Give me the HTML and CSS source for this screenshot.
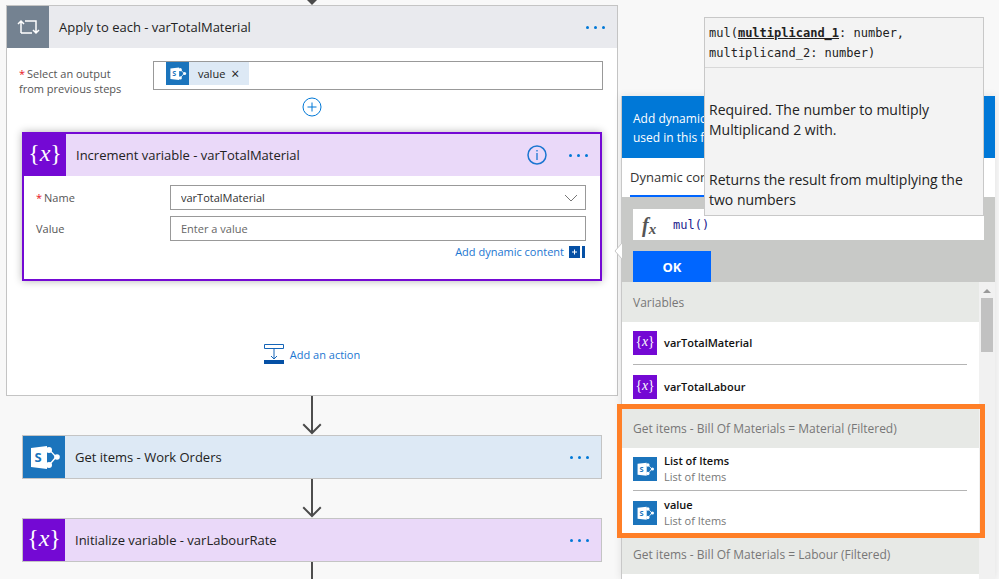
FILE: index.html
```html
<!DOCTYPE html>
<html lang="en">
<head>
    <meta charset="utf-8">
    <title>Edit flow</title>
    <link rel="stylesheet" href="styles.css">
</head>
<body>

<svg class="defs" aria-hidden="true">
    <symbol id="icon-sharepoint" viewBox="0 0 42 42">
        <path d="M24 14 H26 Q29 16 33 21 Q29 26 26 29 H24" fill="none" stroke="#fff" stroke-width="1.4"/>
        <path d="M8 12 L24 10 V33 L8 31 Z" fill="#fff"/>
        <circle cx="26" cy="14" r="3" fill="#fff"/>
        <circle cx="34" cy="21" r="2.800" fill="#fff"/>
        <circle cx="26" cy="29" r="3" fill="#fff"/>
        <text x="15" y="26" text-anchor="middle" font-size="13" class="icon-letter">S</text>
    </symbol>
    <symbol id="icon-variable" viewBox="0 0 42 42">
        <text x="21" y="27" text-anchor="middle" font-size="24" class="icon-braces">{<tspan font-style="italic">x</tspan>}</text>
    </symbol>
    <symbol id="icon-arrow" viewBox="0 0 20 40">
        <path d="M10 0 V38 M1 29 L10 38 L19 29" fill="none" stroke="#4a4a4a" stroke-width="2"/>
    </symbol>
</svg>

<main class="designer">
    <div class="arrow-end">
        <svg width="10" height="5"><path d="M0 0 H10 L5 5 Z" fill="#4a4a4a"/></svg>
    </div>

    <section class="scope">
        <header class="card-header loop">
            <span class="tile">
                <svg width="42" height="42" viewBox="0 0 42 42" fill="none" stroke="#fff" stroke-width="1.5">
                    <path d="M14 27 V15 M11 18 L14 15 L17 18 M18 15 H29 V27 M14 27 H25 M26 24 L29 27 L32 24"/>
                </svg>
            </span>
            <h2>Apply to each - varTotalMaterial</h2>
            <button class="more" aria-label="More options"><i></i><i></i><i></i></button>
        </header>

        <div class="output-row">
            <label for="output"><span class="required">*</span>Select an output<br>from previous steps</label>
            <div class="token-box">
                <span class="token">
                    <svg class="blue" width="23" height="23"><use href="#icon-sharepoint"/></svg>
                    <span>value</span>
                    <button class="remove" aria-label="Remove value">×</button>
                </span>
                <input type="text" id="output">
            </div>
        </div>

        <button class="insert" aria-label="Insert a step">
            <svg width="20" height="20" fill="none" stroke="#0078d7"><circle cx="10" cy="10" r="9"/><path d="M10 5.500 V14.500 M5.500 10 H14.500"/></svg>
        </button>

        <section class="action">
            <header class="card-header variable">
                <span class="tile"><svg width="42" height="42"><use href="#icon-variable"/></svg></span>
                <h2>Increment variable - varTotalMaterial</h2>
                <button class="info" aria-label="Information">
                    <svg width="20" height="20" fill="none" stroke="#1b76d1"><circle cx="10" cy="10" r="9" stroke-width="1.500"/><path d="M10 8 V15 M10 5 V6.500" stroke-width="1.300"/></svg>
                </button>
                <button class="more" aria-label="More options"><i></i><i></i><i></i></button>
            </header>
            <div class="fields">
                <label for="name"><span class="required">*</span>Name</label>
                <div class="select-wrap">
                    <select id="name"><option>varTotalMaterial</option></select>
                    <svg width="14" height="8" fill="none" stroke="#777"><path d="M1 1 L7 7 L13 1"/></svg>
                </div>
                <label for="value">Value</label>
                <input type="text" id="value" placeholder="Enter a value">
            </div>
            <a href="#" class="dynamic-link">Add dynamic content
                <svg width="16" height="12"><path d="M0 0 H11 V12 H0 Z M13 0 H16 V12 H13 Z" fill="#0550a5"/><path d="M3 6 H8 M5.500 3.500 V8.500" stroke="#fff"/></svg>
            </a>
        </section>

        <button class="add-action">
            <svg width="20" height="20" fill="none" stroke="#1565b8"><path d="M.5 .5 H19.500 V4.500 H.5 Z M10 5 V15 M7 12 L10 15 L13 12"/><path d="M0 16 H20 V20 H0 Z" fill="#0550a5" stroke="none"/></svg>
            Add an action
        </button>
    </section>

    <svg class="arrow" width="20" height="39"><use href="#icon-arrow"/></svg>

    <section class="step">
        <header class="card-header sharepoint">
            <span class="tile"><svg width="42" height="42"><use href="#icon-sharepoint"/></svg></span>
            <h2>Get items - Work Orders</h2>
            <button class="more" aria-label="More options"><i></i><i></i><i></i></button>
        </header>
    </section>

    <svg class="arrow" width="20" height="39"><use href="#icon-arrow"/></svg>

    <section class="step">
        <header class="card-header variable">
            <span class="tile"><svg width="42" height="42"><use href="#icon-variable"/></svg></span>
            <h2>Initialize variable - varLabourRate</h2>
            <button class="more" aria-label="More options"><i></i><i></i><i></i></button>
        </header>
    </section>

    <svg class="arrow" width="20" height="39"><use href="#icon-arrow"/></svg>
</main>

<aside class="panel">
    <svg class="pointer" width="8" height="16"><path d="M8 0 L1 8 L8 16" fill="#fff" stroke="#c8c8c8"/></svg>
    <p class="panel-intro">Add dynamic content<br>used in this flow.</p>
    <nav class="tabs">
        <button class="tab active">Dynamic content</button>
    </nav>
    <div class="expression">
        <div class="formula">
            <label for="formula">f<sub>x</sub></label>
            <input type="text" id="formula" value="mul()">
        </div>
        <button class="ok">OK</button>

        <div class="tooltip" role="tooltip">
            <p class="signature">mul(<b>multiplicand_1</b>: number, multiplicand_2: number)</p>
            <div class="docs">
                <p>Required. The number to multiply Multiplicand 2 with.</p>
                <p>Returns the result from multiplying the two numbers</p>
            </div>
        </div>
    </div>

    <div class="list">
        <div class="groups">
            <section class="group">
                <h3>Variables</h3>
                <ul>
                    <li>
                        <svg class="purple" width="24" height="24"><use href="#icon-variable"/></svg>
                        <b>varTotalMaterial</b>
                    </li>
                    <li>
                        <svg class="purple" width="24" height="24"><use href="#icon-variable"/></svg>
                        <b>varTotalLabour</b>
                    </li>
                </ul>
            </section>
            <section class="group highlighted">
                <h3>Get items - Bill Of Materials = Material (Filtered)</h3>
                <ul>
                    <li>
                        <svg class="blue" width="24" height="24"><use href="#icon-sharepoint"/></svg>
                        <p><b>List of Items</b><span>List of Items</span></p>
                    </li>
                    <li>
                        <svg class="blue" width="24" height="24"><use href="#icon-sharepoint"/></svg>
                        <p><b>value</b><span>List of Items</span></p>
                    </li>
                </ul>
            </section>
            <section class="group">
                <h3>Get items - Bill Of Materials = Labour (Filtered)</h3>
            </section>
        </div>
        <div class="scrollbar">
            <svg width="8" height="4"><path d="M0 4 L4 0 L8 4 Z" fill="#999"/></svg>
            <div class="thumb"></div>
        </div>
    </div>
</aside>

</body>
</html>
```

FILE: styles.css
```css
* {
    box-sizing: border-box;
}

body {
    display: flex;
    gap: 3px;
    height: 100vh;
    margin: 0;
    padding: 0 4px 0 6px;
    overflow: hidden;
    background-color: #f8f8f8;
    color: #222;
    font-family: "Open Sans", "Noto Sans", sans-serif;
    font-size: 11px;
}

h2, h3, p, ul {
    margin: 0;
    padding: 0;
    font-weight: normal;
}

button {
    padding: 0;
    border: none;
    background: none;
    font-family: inherit;
    cursor: pointer;
}

input, select {
    font-family: inherit;
    font-size: 11px;
}

svg {
    flex: none;
    display: block;
}

.defs {
    display: none;
}

.icon-letter {
    fill: #1b74bc;
    font-family: "Open Sans", sans-serif;
    font-weight: bold;
}

.icon-braces {
    fill: #fff;
    font-family: "Liberation Serif", serif;
}

.blue {
    background-color: #1b74bc;
}

.purple {
    background-color: #7409d4;
}

/* Flow designer */
.designer {
    flex: 1;
    display: flex;
    flex-direction: column;
    align-items: center;
}

.arrow-end {
    height: 5px;
}

.scope {
    width: 100%;
    border: 1px solid #c4c4c4;
    background-color: #fff;
    display: flex;
    flex-direction: column;
}

.card-header {
    display: flex;
    align-items: center;
    height: 42px;
}

.card-header h2 {
    flex: 1;
    padding-left: 10px;
    font-size: 13px;
}

.tile {
    width: 42px;
    height: 100%;
    display: flex;
    align-items: center;
    justify-content: center;
}

.loop {
    background-color: #e9eaee;
}

.loop .tile {
    background-color: #748291;
}

.variable {
    background-color: #ead9f9;
}

.variable .tile {
    background-color: #7409d4;
}

.sharepoint {
    background-color: #dde9f5;
}

.sharepoint .tile {
    background-color: #1b74bc;
}

.more {
    display: flex;
    gap: 5px;
    padding: 10px 12px;
}

.more i {
    width: 3px;
    height: 3px;
    border-radius: 50%;
    background-color: #0078d7;
}

.output-row {
    display: flex;
    align-items: flex-start;
    padding: 13px 14px 0 12px;
}

.output-row label {
    width: 134px;
    padding-top: 5px;
    line-height: 15px;
}

label {
    color: #555;
}

.required {
    margin-right: 2px;
    color: #e81123;
}

.token-box {
    flex: 1;
    display: flex;
    height: 29px;
    padding-left: 12px;
    border: 1px solid #999;
}

.token-box input {
    flex: 1;
    min-width: 0;
    border: none;
    outline: none;
}

.token {
    display: flex;
    align-items: center;
    gap: 9px;
    height: 23px;
    padding-right: 10px;
    background-color: #dde9f5;
}

.remove {
    margin-left: -3px;
    font-size: 14px;
    line-height: 14px;
    color: #222;
}

.insert {
    align-self: center;
    margin-top: 1px;
}

.action {
    margin: 15px 15px 0;
    padding-bottom: 20px;
    border: 2px solid #7409d4;
    box-shadow: 0 0 8px rgba(0, 0, 0, 0.3);
    background-color: #fff;
}

.info {
    margin-right: 10px;
}

.fields {
    display: grid;
    grid-template-columns: 134px 1fr;
    gap: 6px 0;
    align-items: center;
    padding: 9px 14px 0 12px;
}

.select-wrap {
    position: relative;
}

.fields select, .fields input {
    display: block;
    width: 100%;
    height: 25px;
    padding: 0 10px;
    border: 1px solid #999;
    border-radius: 0;
    background-color: #fff;
    color: #333;
    appearance: none;
}

.fields input::placeholder {
    color: #666;
}

.select-wrap svg {
    position: absolute;
    top: 9px;
    right: 8px;
    pointer-events: none;
}

.dynamic-link {
    display: flex;
    align-items: center;
    justify-content: flex-end;
    gap: 5px;
    padding: 3px 15px 0 0;
    color: #1b76d1;
    text-decoration: none;
}

.add-action {
    align-self: center;
    display: flex;
    align-items: center;
    gap: 6px;
    margin: 63px 0 31px;
    color: #1b76d1;
    font-size: 11px;
}

.step {
    align-self: stretch;
    margin: 0 16px;
    border: 1px solid #c4c4c4;
}

/* Dynamic content panel */
.panel {
    position: relative;
    width: 374px;
    margin-top: 96px;
    border-left: 1px solid #c8c8c8;
    box-shadow: 0 0 8px rgba(0, 0, 0, 0.1);
    background-color: #fff;
    display: flex;
    flex-direction: column;
}

.pointer {
    position: absolute;
    top: 147px;
    left: -8px;
}

.panel-intro {
    height: 62px;
    padding: 13px 11px 0;
    background-color: #0078d7;
    color: #fff;
    font-size: 12px;
    line-height: 19px;
}

.tabs {
    display: flex;
    height: 39px;
    padding-left: 8px;
}

.tab {
    font-size: 13px;
    color: #333;
}

.tab.active {
    border-bottom: 2px solid #0066ff;
}

.expression {
    position: relative;
    padding: 12px 11px 0;
    background-color: #c8c9c7;
}

.formula {
    display: flex;
    align-items: center;
    height: 31px;
    background-color: #fff;
}

.formula label {
    width: 38px;
    padding-left: 9px;
    font-family: "Liberation Serif", serif;
    font-size: 20px;
    font-style: italic;
    font-weight: bold;
    line-height: 20px;
}

.formula sub {
    font-size: 15px;
    line-height: 0;
    vertical-align: -2px;
}

.formula input {
    flex: 1;
    border: none;
    outline: none;
    color: #1a1a8c;
    font-family: "DejaVu Sans Mono", monospace;
    font-size: 12px;
}

.ok {
    width: 78px;
    height: 31px;
    margin-top: 11px;
    background-color: #0066ff;
    color: #fff;
    font-size: 13px;
    font-weight: bold;
    display: block;
}

.tooltip {
    position: absolute;
    right: 11px;
    bottom: 66px;
    width: 280px;
    border: 1px solid #c8c8c8;
    background-color: #f3f3f3;
    color: #222;
}

.signature {
    padding: 5px 4px 4px;
    border-bottom: 1px solid #d8d8d8;
    font-family: "DejaVu Sans Mono", monospace;
    font-size: 12px;
    line-height: 20px;
}

.signature b {
    text-decoration: underline;
}

.docs {
    display: flex;
    flex-direction: column;
    gap: 30px;
    padding: 32px 4px 5px;
    font-size: 14px;
    line-height: 20px;
}

.list {
    flex: 1;
    display: flex;
}

.groups {
    flex: 1;
}

.group h3 {
    height: 40px;
    padding-left: 11px;
    background-color: #e7e9e6;
    color: #777;
    font-size: 12px;
    line-height: 41px;
}

.group ul {
    list-style-type: none;
    padding: 0 12px 0 11px;
}

.group li {
    display: flex;
    align-items: center;
    gap: 7px;
    height: 43px;
    color: #111;
    line-height: 16px;
}

.group li:not(:last-child) {
    border-bottom: 1px solid #b4b4b4;
}

.group b {
    font-weight: 600;
}

.group span {
    display: block;
    color: #777;
}

.highlighted {
    position: relative;
}

.highlighted::after {
    content: "";
    position: absolute;
    inset: -4px -6px -4px -5px;
    border: 5px solid #ff7f27;
    pointer-events: none;
}

.scrollbar {
    width: 16px;
    display: flex;
    flex-direction: column;
    align-items: center;
    gap: 5px;
    padding-top: 7px;
    background-color: #f1f1f1;
}

.thumb {
    width: 12px;
    height: 54px;
    background-color: #c1c1c1;
}
```
